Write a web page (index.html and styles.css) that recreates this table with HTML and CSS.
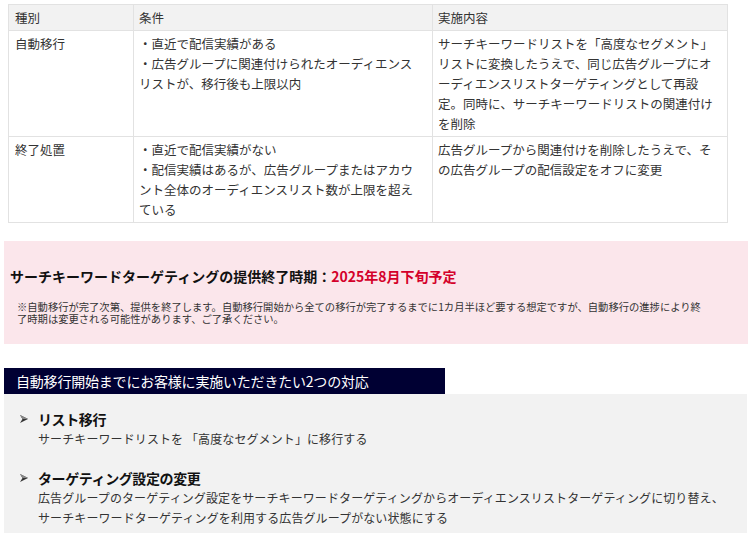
FILE: index.html
```html
<html lang="ja">
<head>
    <meta charset="UTF-8">
    <meta name="viewport" content="width=device-width, initial-scale=1.0">
    <title>サーチキーワードターゲティング 提供終了</title>
    <link rel="stylesheet" href="styles.css">
</head>
<body>
    <table class="rule-table">
        <thead>
            <tr>
                <th class="col-type">種別</th>
                <th class="col-cond">条件</th>
                <th class="col-act">実施内容</th>
            </tr>
        </thead>
        <tbody>
            <tr class="row-auto">
                <td>自動移行</td>
                <td>・直近で配信実績がある<br>・広告グループに関連付けられたオーディエンスリストが、移行後も上限以内</td>
                <td>サーチキーワードリストを「高度なセグメント」リストに変換したうえで、同じ広告グループにオーディエンスリストターゲティングとして再設定。同時に、サーチキーワードリストの関連付けを削除</td>
            </tr>
            <tr class="row-end">
                <td>終了処置</td>
                <td>・直近で配信実績がない<br>・配信実績はあるが、広告グループまたはアカウント全体のオーディエンスリスト数が上限を超えている</td>
                <td>広告グループから関連付けを削除したうえで、その広告グループの配信設定をオフに変更</td>
            </tr>
        </tbody>
    </table>

    <div class="notice">
        <p class="notice-title">サーチキーワードターゲティングの提供終了時期：<span class="notice-date">2025年8月下旬予定</span></p>
        <p class="notice-note">※自動移行が完了次第、提供を終了します。自動移行開始から全ての移行が完了するまでに1カ月半ほど要する想定ですが、自動移行の進捗により終了時期は変更される可能性があります、ご了承ください。</p>
    </div>

    <div class="todo-title">自動移行開始までにお客様に実施いただきたい2つの対応</div>
    <div class="todo-box">
        <div class="todo-item">
            <h3 class="todo-head">
                <svg class="arrow" width="8" height="8" viewBox="0 0 8 8"><path d="M0 0 L8 4 L0 8 L2.5 4 Z" fill="#333"/><path d="M0 0 L8 4 L2.5 4 Z" fill="#888"/></svg>
                リスト移行
            </h3>
            <p class="todo-text">サーチキーワードリストを 「高度なセグメント」に移行する</p>
        </div>
        <div class="todo-item">
            <h3 class="todo-head">
                <svg class="arrow" width="8" height="8" viewBox="0 0 8 8"><path d="M0 0 L8 4 L0 8 L2.5 4 Z" fill="#333"/><path d="M0 0 L8 4 L2.5 4 Z" fill="#888"/></svg>
                ターゲティング設定の変更
            </h3>
            <p class="todo-text">広告グループのターゲティング設定をサーチキーワードターゲティングからオーディエンスリストターゲティングに切り替え、<br>サーチキーワードターゲティングを利用する広告グループがない状態にする</p>
        </div>
    </div>
</body>
</html>
```

FILE: styles.css
```css
body {margin: 4px; font-family: "Noto Sans CJK JP", "Noto Sans", sans-serif; color: #333; background: #fff;}
p, h3 {margin: 0;}

.rule-table {width: 720px; margin-left: 4px; border-collapse: collapse; table-layout: fixed; font-size: 12.5px; line-height: 20px;}
.rule-table th, .rule-table td {box-sizing: border-box; border: 1px solid #e2e2e2; padding: 3px 10px 2px 5px; text-align: left; vertical-align: top; font-weight: normal;}
.rule-table th {background-color: #f2f2f2;}
.rule-table td:first-child, .rule-table th:first-child {padding-left: 6px;}
.col-type {width: 125px;}
.col-cond {width: 299px;}
.row-auto td {height: 105px;}
.row-end td {height: 85px;}

.notice {margin-top: 18px; width: 738px; background-color: #fbe6eb; padding: 25px 0 20px 6px;}
.notice-title {font-size: 14px; font-weight: bold; color: #111; line-height: 20px;}
.notice-date {color: #d4002a;}
.notice-note {margin-top: 15px; padding-left: 7px; max-width: 688px; font-size: 10.3px; line-height: 11.5px; color: #333;}

.todo-title {margin-top: 24px; width: 429px; background-color: #000033; color: #fff; font-size: 14px; line-height: 26px; padding-left: 12px; letter-spacing: -0.2px;}
.todo-box {width: 743px; background-color: #f2f2f2; padding: 15px 0 6px 0;}
.todo-item {margin-bottom: 19px;}
.todo-item:last-child {margin-bottom: 0;}
.todo-head {display: flex; align-items: center; font-size: 14px; font-weight: bold; color: #111; line-height: 20px; padding-left: 16px; letter-spacing: -0.4px;}
.arrow {margin-right: 10px;}
.todo-text {padding-left: 34px; font-size: 12px; letter-spacing: 0.1px; line-height: 20px; color: #333;}
```
